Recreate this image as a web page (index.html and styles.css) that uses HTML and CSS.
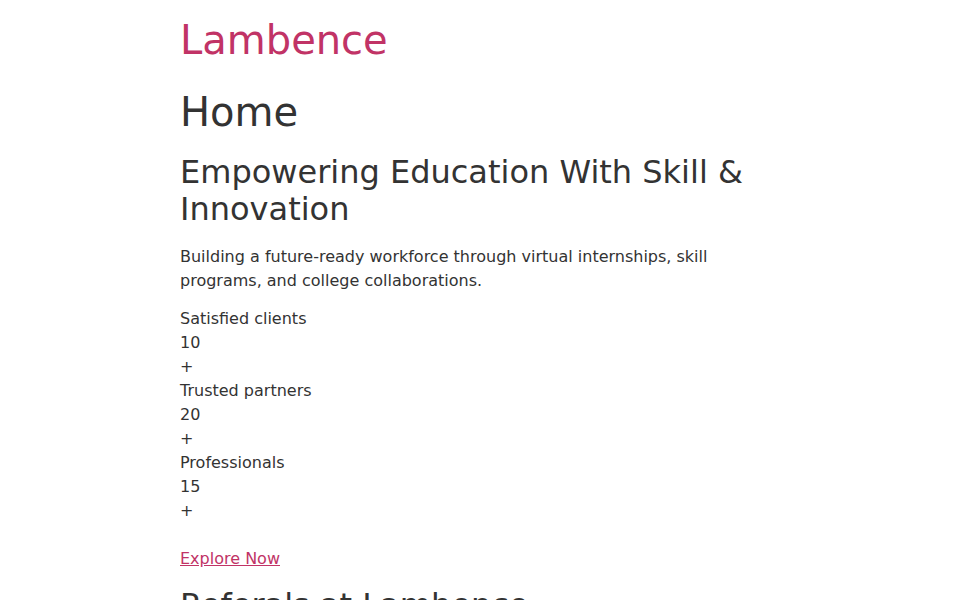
FILE: index.html
```html
<!DOCTYPE html>
<html lang="en">
<head>
<meta charset="utf-8">
<title>Lambence</title>
<link rel="stylesheet" href="styles.css">
</head>
<body>
<div class="container">
  <header class="site-header">
    <a class="logo" href="#">Lambence</a>
  </header>
  <main>
    <h1 class="page-title">Home</h1>
    <section class="hero">
      <h2 class="hero-title">Empowering Education With Skill &amp; Innovation</h2>
      <p class="hero-text">Building a future-ready workforce through virtual internships, skill programs, and college collaborations.</p>
      <div class="stats">
        <div class="stat">
          <div class="stat-label">Satisfied clients</div>
          <div class="stat-value">10</div>
          <div class="stat-plus">+</div>
        </div>
        <div class="stat">
          <div class="stat-label">Trusted partners</div>
          <div class="stat-value">20</div>
          <div class="stat-plus">+</div>
        </div>
        <div class="stat">
          <div class="stat-label">Professionals</div>
          <div class="stat-value">15</div>
          <div class="stat-plus">+</div>
        </div>
      </div>
      <p class="cta"><a class="cta-link" href="#">Explore Now</a></p>
    </section>
    <section class="referrals">
      <h2 class="section-title">Referals at Lambence</h2>
    </section>
  </main>
</div>
</body>
</html>
```
FILE: styles.css
```css
html, body {
  margin: 0;
  padding: 0;
  background: #ffffff;
}
body {
  font-family: "DejaVu Sans", sans-serif;
  font-size: 16px;
  line-height: 1.5;
  color: #333333;
}
.container {
  max-width: 600px;
  margin: 0 auto;
  padding: 16px 0 0;
}
.site-header {
  margin: 0;
}
.logo {
  display: block;
  font-size: 40px;
  line-height: 1.2;
  color: #c13366;
  text-decoration: none;
}
.page-title {
  font-size: 40px;
  font-weight: normal;
  line-height: 1.2;
  margin: 24px 0 0;
}
.hero-title {
  font-size: 32px;
  font-weight: normal;
  line-height: 1.15;
  margin: 18px 0 0;
}
.hero-text {
  margin: 17px 0 0;
}
.stats {
  margin: 14px 0 0;
}
.cta {
  margin: 24px 0 0;
}
.cta-link {
  color: #c13366;
  text-decoration: underline;
}
.section-title {
  font-size: 32px;
  font-weight: normal;
  line-height: 1.15;
  margin: 16px 0 0;
}
```
